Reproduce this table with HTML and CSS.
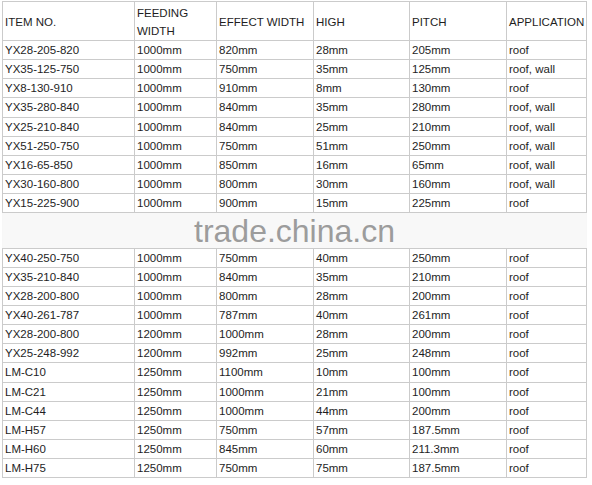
FILE: index.html
```html
<!DOCTYPE html>
<html>
<head>
<meta charset="utf-8">
<link rel="stylesheet" href="styles.css">
</head>
<body>
<table class="spec">
<colgroup>
<col class="c1"><col class="c2"><col class="c3"><col class="c4"><col class="c5"><col class="c6">
</colgroup>
<tbody>
<tr class="head"><td>ITEM NO.</td><td>FEEDING<br>WIDTH</td><td>EFFECT WIDTH</td><td>HIGH</td><td>PITCH</td><td>APPLICATION</td></tr>
<tr><td>YX28-205-820</td><td>1000mm</td><td>820mm</td><td>28mm</td><td>205mm</td><td>roof</td></tr>
<tr><td>YX35-125-750</td><td>1000mm</td><td>750mm</td><td>35mm</td><td>125mm</td><td>roof, wall</td></tr>
<tr><td>YX8-130-910</td><td>1000mm</td><td>910mm</td><td>8mm</td><td>130mm</td><td>roof</td></tr>
<tr><td>YX35-280-840</td><td>1000mm</td><td>840mm</td><td>35mm</td><td>280mm</td><td>roof, wall</td></tr>
<tr><td>YX25-210-840</td><td>1000mm</td><td>840mm</td><td>25mm</td><td>210mm</td><td>roof, wall</td></tr>
<tr><td>YX51-250-750</td><td>1000mm</td><td>750mm</td><td>51mm</td><td>250mm</td><td>roof, wall</td></tr>
<tr><td>YX16-65-850</td><td>1000mm</td><td>850mm</td><td>16mm</td><td>65mm</td><td>roof, wall</td></tr>
<tr><td>YX30-160-800</td><td>1000mm</td><td>800mm</td><td>30mm</td><td>160mm</td><td>roof, wall</td></tr>
<tr><td>YX15-225-900</td><td>1000mm</td><td>900mm</td><td>15mm</td><td>225mm</td><td>roof</td></tr>
<tr class="gap"><td colspan="6"><span class="mark">trade.china.cn</span></td></tr>
<tr><td>YX40-250-750</td><td>1000mm</td><td>750mm</td><td>40mm</td><td>250mm</td><td>roof</td></tr>
<tr><td>YX35-210-840</td><td>1000mm</td><td>840mm</td><td>35mm</td><td>210mm</td><td>roof</td></tr>
<tr><td>YX28-200-800</td><td>1000mm</td><td>800mm</td><td>28mm</td><td>200mm</td><td>roof</td></tr>
<tr><td>YX40-261-787</td><td>1000mm</td><td>787mm</td><td>40mm</td><td>261mm</td><td>roof</td></tr>
<tr><td>YX28-200-800</td><td>1200mm</td><td>1000mm</td><td>28mm</td><td>200mm</td><td>roof</td></tr>
<tr><td>YX25-248-992</td><td>1200mm</td><td>992mm</td><td>25mm</td><td>248mm</td><td>roof</td></tr>
<tr><td>LM-C10</td><td>1250mm</td><td>1100mm</td><td>10mm</td><td>100mm</td><td>roof</td></tr>
<tr><td>LM-C21</td><td>1250mm</td><td>1000mm</td><td>21mm</td><td>100mm</td><td>roof</td></tr>
<tr><td>LM-C44</td><td>1250mm</td><td>1000mm</td><td>44mm</td><td>200mm</td><td>roof</td></tr>
<tr><td>LM-H57</td><td>1250mm</td><td>750mm</td><td>57mm</td><td>187.5mm</td><td>roof</td></tr>
<tr><td>LM-H60</td><td>1250mm</td><td>845mm</td><td>60mm</td><td>211.3mm</td><td>roof</td></tr>
<tr><td>LM-H75</td><td>1250mm</td><td>750mm</td><td>75mm</td><td>187.5mm</td><td>roof</td></tr>
</tbody>
</table>
</body>
</html>
```

FILE: styles.css
```css
html, body {
  margin: 0;
  padding: 0;
  background: #ffffff;
}

body {
  font-family: "Liberation Sans", Arial, sans-serif;
  font-size: 11.5px;
  color: #1e1e1e;
}

.spec {
  margin: 1px 0 0 2px;
  border-collapse: collapse;
  table-layout: fixed;
  width: 584px;
}

.c1 { width: 132px; }
.c2 { width: 82px; }
.c3 { width: 97px; }
.c4 { width: 96px; }
.c5 { width: 97px; }
.c6 { width: 80px; }

.spec td {
  border: 1px solid #cbcbcb;
  height: 19.15px;
  padding: 0 1px 0 2px;
  box-sizing: border-box;
  line-height: 14px;
  vertical-align: middle;
  white-space: nowrap;
  overflow: hidden;
}

.spec .head td {
  height: 38.5px;
  line-height: 18px;
  padding-top: 2px;
}

.spec .gap td {
  height: 35.3px;
  border-left-color: #f7f7f7;
  border-right-color: #f7f7f7;
  background: #f8f8f8;
  text-align: center;
  padding: 0;
}

.mark {
  font-size: 32px;
  line-height: 32px;
  color: #9c9c9c;
  position: relative;
  top: 1px;
}
```
